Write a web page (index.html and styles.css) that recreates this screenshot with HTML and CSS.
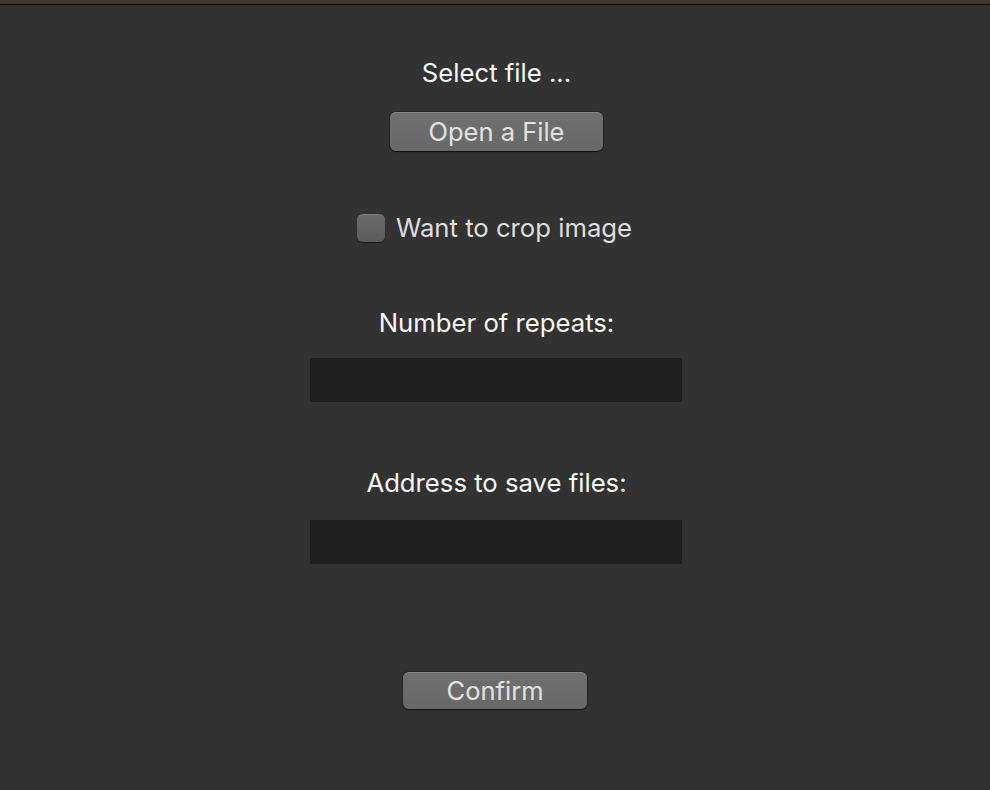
FILE: index.html
```html
<!DOCTYPE html>
<html>
<head>
<meta charset="utf-8">
<link rel="stylesheet" href="styles.css">
</head>
<body>
<div class="titlebar"></div>
<main class="form">
  <div class="label first">Select file ...</div>
  <button class="btn open">Open a File</button>
  <label class="check">
    <span class="box"></span>
    <span class="check-text">Want to crop image</span>
  </label>
  <div class="label num">Number of repeats:</div>
  <div class="field"></div>
  <div class="label addr">Address to save files:</div>
  <div class="field second"></div>
  <button class="btn confirm">Confirm</button>
</main>
</body>
</html>
```
FILE: styles.css
```css
html, body {
  margin: 0;
  padding: 0;
  background: #323232;
  height: 100%;
}
body {
  font-family: Inter, "Noto Sans", sans-serif;
  overflow: hidden;
}
.titlebar {
  height: 4px;
  background: #3e3939;
  border-bottom: 1px solid #0c0c0c;
}
.form {
  display: flex;
  flex-direction: column;
  align-items: center;
  padding-left: 3px;
}
.label {
  color: #f6f6f6;
  font-size: 25.7px;
  line-height: 28px;
}
.first { margin-top: 54px; }
.btn {
  font-family: Inter, "Noto Sans", sans-serif;
  font-size: 25.5px;
  color: #e2e2e2;
  background: linear-gradient(#707070, #686868);
  border: none;
  border-radius: 6px;
  box-shadow: inset 0 1px 0 rgba(255,255,255,0.18), 0 1px 1px rgba(0,0,0,0.6), 0 0 0 1px rgba(0,0,0,0.25);
  padding: 0;
  display: flex;
  align-items: center;
  justify-content: center;
}
.open {
  width: 213px;
  height: 39px;
  margin-top: 25px;
}
.check {
  display: flex;
  align-items: center;
  gap: 11px;
  margin-top: 63px;
  margin-left: -4px;
}
.box {
  width: 28px;
  height: 28px;
  box-sizing: border-box;
  border-radius: 6px;
  background: linear-gradient(#6c6c6c, #5b5b5b);
  box-shadow: inset 0 1px 0 rgba(255,255,255,0.12), 0 1px 1px rgba(0,0,0,0.55);
}
.check-text {
  color: #dedede;
  font-size: 25.7px;
  line-height: 28px;
}
.num { margin-top: 67px; }
.field {
  width: 372px;
  height: 44px;
  background: #1f1f1f;
  margin-top: 21px;
  margin-left: -2px;
}
.addr { margin-top: 67px; }
.field.second { margin-top: 23px; }
.confirm {
  width: 184px;
  height: 37px;
  margin-top: 108px;
  margin-left: -3px;
}
```
